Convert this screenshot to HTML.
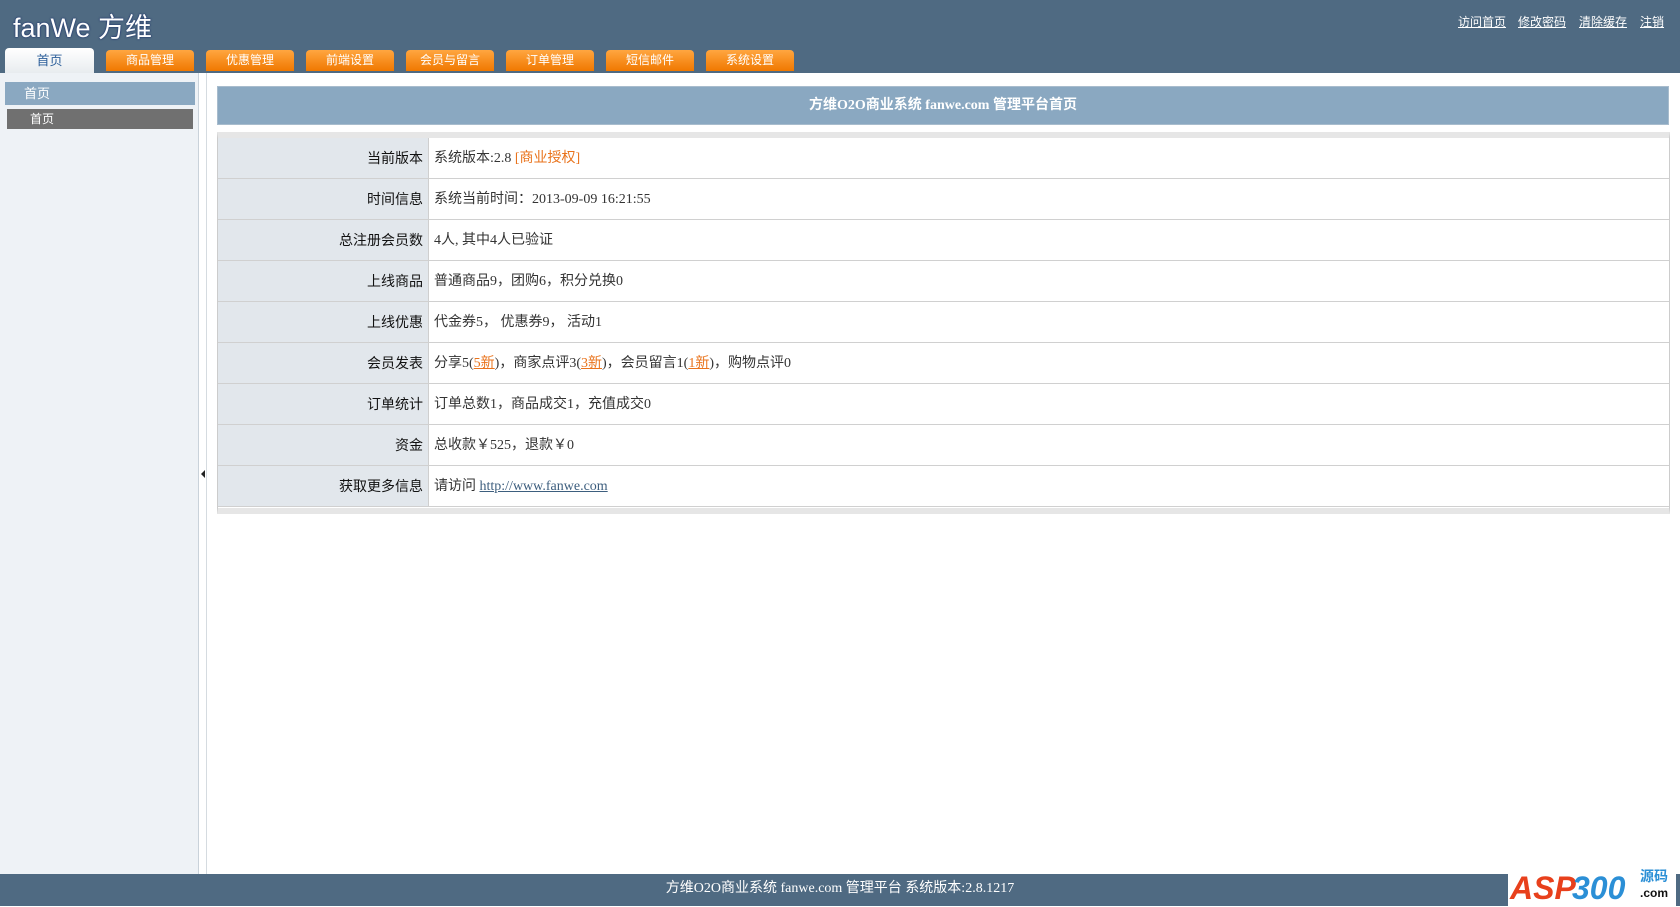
<!DOCTYPE html>
<html><head><meta charset="utf-8"><style>
*{margin:0;padding:0;box-sizing:border-box}
body{width:1680px;height:906px;overflow:hidden;background:#fff;font-family:"Liberation Serif","Noto Sans CJK SC",serif;position:relative}
.hd{position:absolute;left:0;top:0;width:1680px;height:73px;background:#4f6a82}
.logo{position:absolute;left:13px;top:6px;font:27px "Liberation Sans","Noto Sans CJK SC",sans-serif;color:#fff;text-shadow:0 0 2px #1a2f6a,0 0 1px #1a2f6a}
.links{position:absolute;top:13px;font:12px "Liberation Sans","Noto Sans CJK SC",sans-serif;color:#fff}
.links a{position:absolute;color:#fff;text-decoration:underline;white-space:nowrap}
.tab{position:absolute;top:50px;height:21px;width:88px;border-radius:4px 4px 0 0;background:linear-gradient(#ffa640,#f07800);color:#fff;font:12px "Liberation Sans","Noto Sans CJK SC",sans-serif;text-align:center;line-height:21px}
.tab.on{top:48px;height:25px;width:89px;left:5px;background:linear-gradient(#fff,#e8ecef);color:#2d5f9a;font-size:13px;line-height:26px}
.side{position:absolute;left:0;top:73px;width:199px;height:801px;background:#eef2f6;border-right:1px solid #c9d2da}
.sb1{position:absolute;left:5px;top:82px;width:190px;height:23px;background:#8aa8c1;color:#fff;font:13px "Liberation Sans","Noto Sans CJK SC",sans-serif;line-height:23px;padding-left:19px}
.sb2{position:absolute;left:7px;top:109px;width:186px;height:20px;background:#707070;color:#fff;font:12px "Liberation Sans","Noto Sans CJK SC",sans-serif;line-height:20px;padding-left:23px}
.split{position:absolute;left:199px;top:73px;width:8px;height:801px;background:#fff;border-right:1px solid #d5dbe0}
.arr{position:absolute;left:201px;top:470px;width:0;height:0;border-top:4px solid transparent;border-bottom:4px solid transparent;border-right:4px solid #222}
.title{position:absolute;left:217px;top:86px;width:1452px;height:39px;background:#8aa8c1;border:1px solid #a8bccd;color:#fff;font:bold 14px "Liberation Serif","Noto Sans CJK SC",serif;text-align:center;line-height:38px}
.tbl{position:absolute;left:217px;top:132px;width:1453px;height:382px;border:1px solid #ccc;background:#fff;border-top:6px solid #e6e6e6;border-bottom:6px solid #e6e6e6}
.row{position:absolute;left:0;width:1451px;height:41px;border-bottom:1px solid #d0d0d0;font-size:14px;line-height:40px}
.lab{position:absolute;left:0;top:0;width:211px;height:40px;background:#e2e7ec;border-right:1px solid #cfcfcf;text-align:right;padding-right:5px;color:#111;font-family:"Liberation Sans","Noto Sans CJK SC",sans-serif}
.val{position:absolute;left:216px;top:1px;color:#333;font-size:14px}
.o{color:#e9731c}.u{color:#e9731c;text-decoration:underline}.lk{color:#3d5e7e;text-decoration:underline}
.ft{position:absolute;left:0;top:874px;width:1680px;height:32px;background:#4f6a82;color:#fff;font-size:14px;text-align:center;line-height:30px}
.asp{position:absolute;left:1508px;top:854px;width:168px;height:52px;background:#fff}
</style></head><body>
<div class="hd">
<div class="logo">fanWe 方维</div>
<div class="links"><a style="left:1458px">访问首页</a><a style="left:1518px">修改密码</a><a style="left:1579px">清除缓存</a><a style="left:1640px">注销</a></div>
<div class="tab on">首页</div>
<div class="tab" style="left:106px">商品管理</div>
<div class="tab" style="left:206px">优惠管理</div>
<div class="tab" style="left:306px">前端设置</div>
<div class="tab" style="left:406px">会员与留言</div>
<div class="tab" style="left:506px">订单管理</div>
<div class="tab" style="left:606px">短信邮件</div>
<div class="tab" style="left:706px">系统设置</div>
</div>
<div class="side"></div>
<div class="sb1">首页</div>
<div class="sb2">首页</div>
<div class="split"></div><div class="arr"></div>
<div class="title">方维O2O商业系统 fanwe.com 管理平台首页</div>
<div class="tbl">
<div class="row" style="top:0"><div class="lab">当前版本</div><div class="val">系统版本:2.8 <span class="o">[商业授权]</span></div></div>
<div class="row" style="top:41px"><div class="lab">时间信息</div><div class="val">系统当前时间：2013-09-09 16:21:55</div></div>
<div class="row" style="top:82px"><div class="lab">总注册会员数</div><div class="val">4人, 其中4人已验证</div></div>
<div class="row" style="top:123px"><div class="lab">上线商品</div><div class="val">普通商品9，团购6，积分兑换0</div></div>
<div class="row" style="top:164px"><div class="lab">上线优惠</div><div class="val">代金券5， 优惠券9， 活动1</div></div>
<div class="row" style="top:205px"><div class="lab">会员发表</div><div class="val">分享5(<span class="u">5新</span>)，商家点评3(<span class="u">3新</span>)，会员留言1(<span class="u">1新</span>)，购物点评0</div></div>
<div class="row" style="top:246px"><div class="lab">订单统计</div><div class="val">订单总数1，商品成交1，充值成交0</div></div>
<div class="row" style="top:287px"><div class="lab">资金</div><div class="val">总收款￥525，退款￥0</div></div>
<div class="row" style="top:328px"><div class="lab">获取更多信息</div><div class="val">请访问 <span class="lk">http://www.fanwe.com</span></div></div>
</div>
<div class="ft">方维O2O商业系统 fanwe.com 管理平台 系统版本:2.8.1217</div>
<div class="asp"><span style="position:absolute;left:2px;top:16px;font:italic bold 32px 'Liberation Sans',sans-serif;color:#e8401c">ASP</span><span style="position:absolute;left:64px;top:16px;font:italic bold 32px 'Liberation Sans',sans-serif;color:#2b8fd6">300</span><span style="position:absolute;left:132px;top:12px;font:bold 14px 'Noto Sans CJK SC',sans-serif;color:#2b8fd6">源码</span><span style="position:absolute;left:132px;top:32px;font:bold 12px 'Liberation Sans',sans-serif;color:#111">.com</span></div>
</body></html>
